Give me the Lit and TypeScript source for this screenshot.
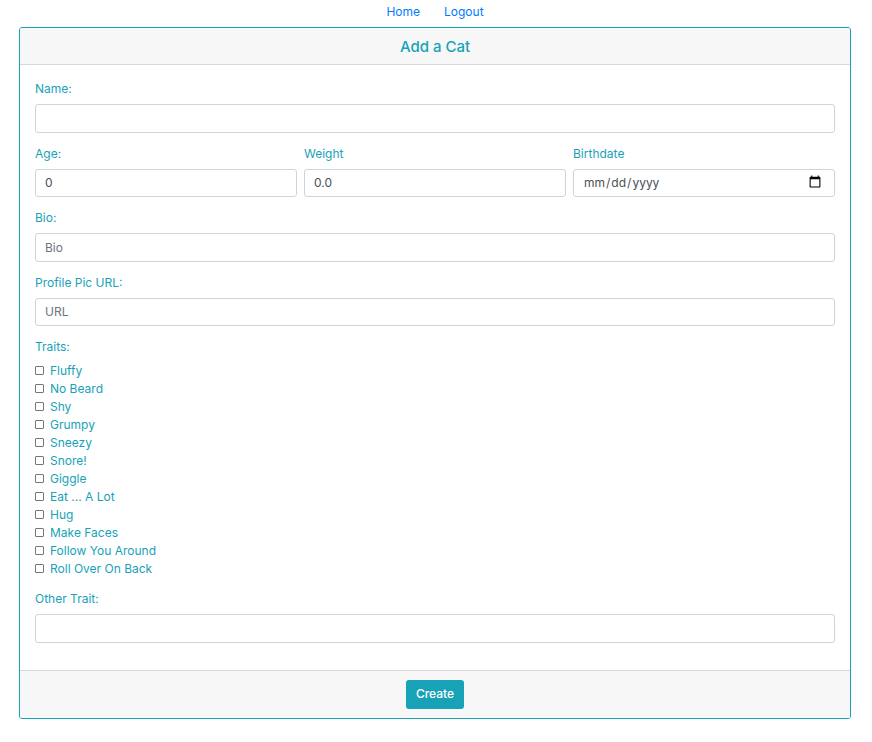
import { LitElement, html, css } from "lit";
import { customElement } from "lit/decorators.js";

const TRAITS = [
  "Fluffy",
  "No Beard",
  "Shy",
  "Grumpy",
  "Sneezy",
  "Snore!",
  "Giggle",
  "Eat ... A Lot",
  "Hug",
  "Make Faces",
  "Follow You Around",
  "Roll Over On Back",
];

@customElement("app-root")
export class AppRoot extends LitElement {
  static styles = css`
    :host {
      display: block;
      padding: 0 21px 23px 19px;
      background: #fff;
      color: #17a2b8;
      font-family: Inter, "Liberation Sans", sans-serif;
      font-size: 12px;
      line-height: 18px;
    }
    *,
    *::before,
    *::after {
      box-sizing: border-box;
    }
    .nav {
      display: flex;
      justify-content: center;
      gap: 24px;
      padding: 3px 0 6px;
    }
    .link {
      color: #007bff;
      text-decoration: none;
    }
    .card {
      border: 1px solid #17a2b8;
      border-radius: 3px;
    }
    .header {
      padding: 10px 15px 8px;
      background: #f7f7f7;
      border-bottom: 1px solid #d6d8d9;
      border-radius: 2px 2px 0 0;
      text-align: center;
    }
    .title {
      margin: 0;
      font-size: 15px;
      font-weight: 500;
      line-height: 18px;
    }
    .body {
      display: flex;
      flex-direction: column;
      gap: 12px;
      padding: 15px 15px 27px;
    }
    .field {
      display: flex;
      flex-direction: column;
      gap: 6px;
      min-width: 0;
    }
    .row {
      display: grid;
      grid-template-columns: repeat(3, minmax(0, 1fr));
      gap: 7px;
    }
    .control {
      width: 100%;
      height: 29px;
      margin: 0;
      padding: 0 9px;
      border: 1px solid #ced4da;
      border-radius: 3px;
      background: #fff;
      color: #495057;
      font: inherit;
      outline: none;
    }
    .compact {
      height: 28px;
      padding-bottom: 2px;
    }
    .date {
      height: 28px;
    }
    .date::-webkit-calendar-picker-indicator {
      width: 14px;
      height: 14px;
      margin-right: 1px;
      margin-bottom: 2px;
    }
    .control::placeholder {
      color: #6c757d;
      opacity: 1;
    }
    .control:focus {
      border-color: #80bdff;
    }
    .traits {
      margin: 0;
      padding: 0;
      border: 0;
      min-width: 0;
    }
    .legend {
      padding: 0;
      margin-bottom: 6px;
    }
    .trait {
      display: flex;
      align-items: center;
      gap: 6px;
    }
    .box {
      appearance: none;
      width: 9px;
      height: 9px;
      margin: 0 0 1px;
      border: 1px solid #767676;
      border-radius: 1px;
      background: #fff;
    }
    .box:checked {
      border-color: #007bff;
      background: #007bff;
    }
    .footer {
      display: flex;
      justify-content: center;
      padding: 9px 15px;
      background: #f7f7f7;
      border-top: 1px solid #d6d8d9;
      border-radius: 0 0 2px 2px;
    }
    .create {
      height: 29px;
      padding: 0 10px 2px;
      border: 0;
      border-radius: 3px;
      background: #17a2b8;
      color: #fff;
      font: inherit;
      font-weight: 500;
      cursor: pointer;
    }
  `;

  render() {
    return html`
      <nav class="nav">
        <a class="link" href="#home">Home</a>
        <a class="link" href="#logout">Logout</a>
      </nav>
      <form class="card" @submit=${(e: Event) => e.preventDefault()}>
        <header class="header"><h1 class="title">Add a Cat</h1></header>
        <div class="body">
          <div class="field">
            <label for="name">Name:</label>
            <input class="control" id="name" type="text" />
          </div>
          <div class="row">
            <div class="field">
              <label for="age">Age:</label>
              <input class="control compact" id="age" type="number" value="0" />
            </div>
            <div class="field">
              <label for="weight">Weight</label>
              <input class="control compact" id="weight" type="number" step="0.1" value="0.0" />
            </div>
            <div class="field">
              <label for="birthdate">Birthdate</label>
              <input class="control date" id="birthdate" type="date" />
            </div>
          </div>
          <div class="field">
            <label for="bio">Bio:</label>
            <input class="control" id="bio" type="text" placeholder="Bio" />
          </div>
          <div class="field">
            <label for="pic">Profile Pic URL:</label>
            <input class="control compact" id="pic" type="url" placeholder="URL" />
          </div>
          <fieldset class="traits">
            <legend class="legend">Traits:</legend>
            ${TRAITS.map(
              (trait) => html`
                <label class="trait"><input class="box" type="checkbox" />${trait}</label>
              `,
            )}
          </fieldset>
          <div class="field">
            <label for="other">Other Trait:</label>
            <input class="control" id="other" type="text" />
          </div>
        </div>
        <footer class="footer">
          <button class="create" type="submit">Create</button>
        </footer>
      </form>
    `;
  }
}
